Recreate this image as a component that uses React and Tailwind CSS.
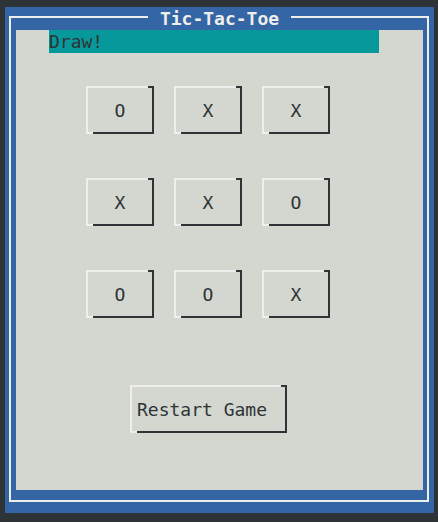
import React, { useState } from "react";

const mono = "font-['DejaVu_Sans_Mono',monospace] text-[18px] leading-[23px]";

// Final board from the finished game
const START = ["O", "X", "X", "X", "X", "O", "O", "O", "X"];

function TallButton({ label, className, onClick, children }) {
  return (
    <button
      onClick={onClick}
      className={`relative flex items-center h-[48px] bg-[#d3d7cf] text-[#2e3436] border-t-2 border-l-2 border-[#eeeeec] border-b-2 border-r-2 border-b-[#2e3436] border-r-[#2e3436] ${mono} ${className}`}
    >
      {/* corner pieces of the tall border */}
      <span className="absolute -top-[2px] -right-[2px] w-[6px] h-[2px] bg-[#2e3436]" />
      <span className="absolute -bottom-[2px] -left-[2px] w-[7px] h-[2px] bg-[#eeeeec]" />
      {label}
      {children}
    </button>
  );
}

export default function App() {
  const [board, setBoard] = useState(START);
  const [status, setStatus] = useState("Draw!");

  const restart = () => {
    setBoard(Array(9).fill(" "));
    setStatus("X's turn");
  };

  return (
    <div className="w-[438px] h-[522px] bg-[#2e3436] pt-[7px] pl-[5px]">
      {/* Dialog panel */}
      <div className="relative w-[429px] h-[506px] bg-[#3465a4] pt-[9px] pl-[4px]">
        <div className="w-[420px] h-[486px] border-2 border-[#eeeeec]">
          {/* Content area */}
          <div className="ml-[5px] mt-[12px] w-[407px] h-[460px] bg-[#d3d7cf] flex flex-col">
            <div className={`ml-[33px] w-[330px] h-[23px] bg-[#06989a] text-[#2e3436] ${mono}`}>
              {status}
            </div>

            <div className="mt-[33px] ml-[70px] grid grid-cols-[68px_68px_68px] gap-x-[20px] gap-y-[44px]">
              {board.map((cell, i) => (
                <TallButton
                  key={i}
                  label={cell}
                  className="w-[68px] justify-center"
                  onClick={() => {}}
                />
              ))}
            </div>

            <div className="mt-[67px] ml-[114px]">
              <TallButton
                label="Restart Game"
                className="w-[157px] pl-[5px] justify-start"
                onClick={restart}
              />
            </div>
          </div>
        </div>

        {/* Title over the frame's top line */}
        <div className="absolute top-0 left-0 right-0 flex justify-center">
          <div className={`px-[12px] bg-[#3465a4] text-[#eeeeec] font-bold ${mono}`}>
            Tic-Tac-Toe
          </div>
        </div>
      </div>
    </div>
  );
}
